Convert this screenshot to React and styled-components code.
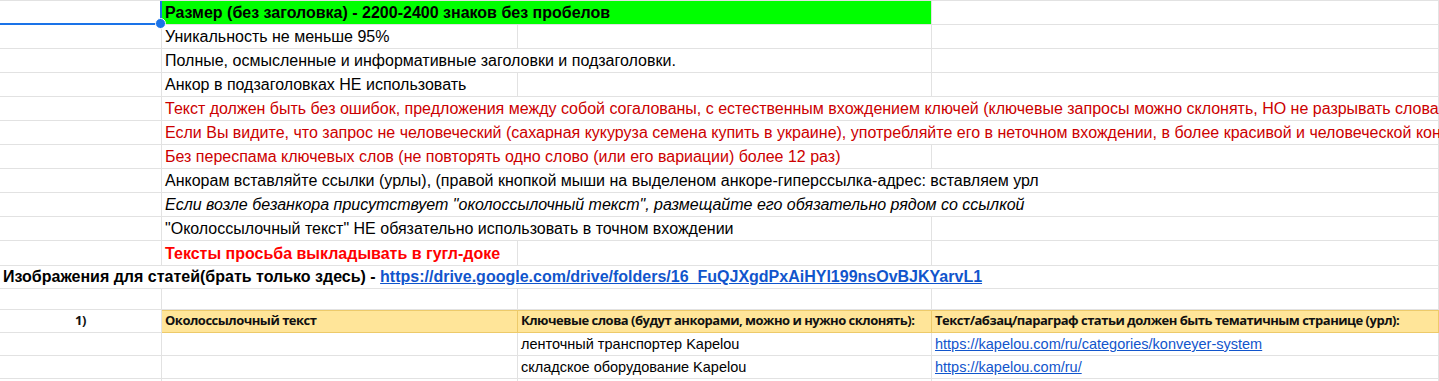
import React from 'react'
import styled, { createGlobalStyle, css } from 'styled-components'

const GlobalStyle = createGlobalStyle`
    html, body {
        margin: 0;
        padding: 0;
        background: #fff;
        overflow: hidden;
    }
    body {
        font-family: "Liberation Sans", Arial, sans-serif;
        font-size: 16px;
        color: #000;
    }
`

const COLS = '162px 356px 414px 1fr'
const GRID = '#e2e2e2'

const Sheet = styled.div`
    width: 1439px;
    border-top: 1px solid ${GRID};
`

const Row = styled.div`
    display: grid;
    grid-template-columns: ${COLS};
    height: ${p => p.$h || 24}px;
`

const Cell = styled.div`
    grid-column: span ${p => p.$span || 1};
    display: flex;
    align-items: flex-end;
    justify-content: ${p => (p.$center ? 'center' : 'flex-start')};
    padding: 0 3px 2px;
    line-height: 18px;
    white-space: nowrap;
    min-width: 0;
    box-sizing: border-box;
    border-right: 1px solid ${GRID};
    border-bottom: 1px solid ${GRID};
    background: ${p => p.$bg || 'transparent'};
    color: ${p => p.$color || '#000'};
    font-size: ${p => (p.$small ? '14.5px' : '16px')};
    font-weight: ${p => (p.$bold ? 700 : 400)};
    font-style: ${p => (p.$italic ? 'italic' : 'normal')};
    ${p => p.$calibri && css`
        font-family: "Open Sans", "Noto Sans", sans-serif;
        font-size: 13px;
        font-weight: 700;
        letter-spacing: -0.5px;
        padding-bottom: 3px;
        color: #111;
    `}
    ${p => p.$head && css`
        background: #ffe599;
        border-right: 1px solid #edca6a;
        border-bottom: 1px solid #edca6a;
        box-shadow: inset 0 1px 0 #edca6a;
    `}
`

const SelectedCell = styled(Cell)`
    position: relative;
    border-right: 2px solid #1a73e8;
    border-bottom: 2px solid #1a73e8;
    &::after {
        content: "";
        position: absolute;
        right: -6px;
        bottom: -6px;
        width: 9px;
        height: 9px;
        border-radius: 50%;
        background: #1a73e8;
        border: 1px solid #fff;
        z-index: 2;
    }
`

const Link = styled.a`
    color: #1155cc;
    text-decoration: underline;
`

const RED = '#cc0000'

export default function App() {
    return (
        <>
            <GlobalStyle />
            <Sheet>
                <Row>
                    <SelectedCell />
                    <Cell $span={2} $bg="#00ff00" $bold>Размер (без заголовка) - 2200-2400 знаков без пробелов</Cell>
                    <Cell />
                </Row>
                <Row>
                    <Cell />
                    <Cell>Уникальность не меньше 95%</Cell>
                    <Cell />
                    <Cell />
                </Row>
                <Row>
                    <Cell />
                    <Cell $span={2}>Полные, осмысленные и информативные заголовки и подзаголовки.</Cell>
                    <Cell />
                </Row>
                <Row>
                    <Cell />
                    <Cell>Анкор в подзаголовках НЕ использовать</Cell>
                    <Cell />
                    <Cell />
                </Row>
                <Row>
                    <Cell />
                    <Cell $span={3} $color={RED}>Текст должен быть без ошибок, предложения между собой согалованы, с естественным вхождением ключей (ключевые запросы можно склонять, НО не разрывать слова</Cell>
                </Row>
                <Row>
                    <Cell />
                    <Cell $span={3} $color={RED}>Если Вы видите, что запрос не человеческий (сахарная кукуруза семена купить в украине), употребляйте его в неточном вхождении, в более красивой и человеческой кон</Cell>
                </Row>
                <Row>
                    <Cell />
                    <Cell $span={2} $color={RED}>Без переспама ключевых слов (не повторять одно слово (или его вариации) более 12 раз)</Cell>
                    <Cell />
                </Row>
                <Row>
                    <Cell />
                    <Cell $span={3}>Анкорам вставляйте ссылки (урлы), (правой кнопкой мыши на выделеном анкоре-гиперссылка-адрес: вставляем урл</Cell>
                </Row>
                <Row>
                    <Cell />
                    <Cell $span={3} $italic>Если возле безанкора присутствует "околоссылочный текст", размещайте его обязательно рядом со ссылкой</Cell>
                </Row>
                <Row>
                    <Cell />
                    <Cell $span={2}>"Околоссылочный текст" НЕ обязательно использовать в точном вхождении</Cell>
                    <Cell />
                </Row>
                <Row $h={25}>
                    <Cell />
                    <Cell $bold $color="#ff0000">Тексты просьба выкладывать в гугл-доке</Cell>
                    <Cell />
                    <Cell />
                </Row>
                <Row $h={23}>
                    <Cell $span={4} $bold>
                        Изображения для статей(брать только здесь) -&nbsp;
                        <Link href="#">https://drive.google.com/drive/folders/16_FuQJXgdPxAiHYl199nsOvBJKYarvL1</Link>
                    </Cell>
                </Row>
                <Row $h={21}>
                    <Cell />
                    <Cell />
                    <Cell />
                    <Cell />
                </Row>
                <Row $h={23}>
                    <Cell $calibri $center>1)</Cell>
                    <Cell $calibri $head>Околоссылочный текст</Cell>
                    <Cell $calibri $head>Ключевые слова (будут анкорами, можно и нужно склонять):</Cell>
                    <Cell $calibri $head>Текст/абзац/параграф статьи должен быть тематичным странице (урл):</Cell>
                </Row>
                <Row $h={23}>
                    <Cell />
                    <Cell />
                    <Cell $small>ленточный транспортер Kapelou</Cell>
                    <Cell $small><Link href="#">https://kapelou.com/ru/categories/konveyer-system</Link></Cell>
                </Row>
                <Row $h={23}>
                    <Cell />
                    <Cell />
                    <Cell $small>складское оборудование Kapelou</Cell>
                    <Cell $small><Link href="#">https://kapelou.com/ru/</Link></Cell>
                </Row>
                <Row $h={23}>
                    <Cell />
                    <Cell />
                    <Cell />
                    <Cell />
                </Row>
            </Sheet>
        </>
    )
}
